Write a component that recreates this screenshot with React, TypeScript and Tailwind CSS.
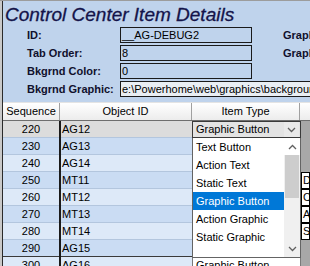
import React from 'react';

const rows = [
  { seq: '220', id: 'AG12', bg: 'bg-[#dcdcdc]', extra: '' },
  { seq: '230', id: 'AG13', bg: 'bg-[#cadcf3]', extra: '' },
  { seq: '240', id: 'AG14', bg: 'bg-[#dde9f8]', extra: '' },
  { seq: '250', id: 'MT11', bg: 'bg-[#cadcf3]', extra: 'D' },
  { seq: '260', id: 'MT12', bg: 'bg-[#dde9f8]', extra: 'C' },
  { seq: '270', id: 'MT13', bg: 'bg-[#cadcf3]', extra: 'A' },
  { seq: '280', id: 'MT14', bg: 'bg-[#dde9f8]', extra: 'S' },
  { seq: '290', id: 'AG15', bg: 'bg-[#cadcf3]', extra: '' },
  { seq: '300', id: 'AG16', bg: 'bg-[#dde9f8]', extra: '' },
];

const items = ['Text Button', 'Action Text', 'Static Text', 'Graphic Button', 'Action Graphic', 'Static Graphic'];

function Chevron({ up = false }: { up?: boolean }) {
  return (
    <svg width="9" height="6" viewBox="0 0 9 6">
      <polyline
        points={up ? '1,5 4.5,1.5 8,5' : '1,1 4.5,4.5 8,1'}
        fill="none"
        stroke="#606060"
        strokeWidth="1.3"
      />
    </svg>
  );
}

function Field({ label, value, right, full, light }: { label: string; value: string; right?: string; full?: boolean; light?: boolean }) {
  return (
    <div className="flex h-[16px] items-center overflow-hidden">
      <div className="w-[117px] shrink-0 pl-[24px] text-[11px] font-bold leading-[16px] text-[#10102c] whitespace-nowrap">{label}</div>
      <div
        className={`h-[16px] border border-[#1a1a1a] pl-[1px] text-[11px] leading-[14px] text-black whitespace-nowrap overflow-hidden ${
          full ? 'flex-1 border-r-0' : 'w-[132px] shrink-0'
        } ${light ? 'bg-[#e9eef3]' : ''}`}
      >
        {value}
      </div>
      {right && <div className="ml-[31px] shrink-0 text-[11px] font-bold leading-[16px] text-[#10102c] whitespace-nowrap">{right}</div>}
    </div>
  );
}

export default function App() {
  return (
    <div className="w-[310px] h-[266px] overflow-hidden bg-[#bfd3ec] border-t border-[#9c9c9c] font-['Liberation_Sans',Arial,sans-serif]">
      <div className="flex h-full">
        <div className="w-[2px] shrink-0 bg-[#c9c9c9]" />
        <div className="w-[1px] shrink-0 bg-[#2a2a2a]" />
        <div className="flex-1 min-w-0 flex flex-col">
          <div className="h-[26px] pt-[1px] pl-[2px] text-[19px] italic leading-[26px] text-[#14144a] whitespace-nowrap font-['Liberation_Sans',sans-serif] [-webkit-text-stroke:0.3px_#14144a]">
            Control Center Item Details
          </div>
          <div className="flex flex-col gap-[2px]">
            <Field label="ID:" value="__AG-DEBUG2" right="Graphic" />
            <Field label="Tab Order:" value="8" right="Graphic" />
            <Field label="Bkgrnd Color:" value="0" />
            <Field label="Bkgrnd Graphic:" value="e:\Powerhome\web\graphics\background.jpg" full light />
          </div>
          <div className="mt-[5px] flex h-[19px] border-t border-[#e4e4e4] border-b border-b-[#6e6e6e] bg-gradient-to-b from-[#ffffff] to-[#ececec] text-[11px] leading-[17px] text-black">
            <div className="w-[57px] shrink-0 text-center border-r border-[#a0a0a0]">Sequence</div>
            <div className="w-[132px] shrink-0 text-center border-r border-[#a0a0a0]">Object ID</div>
            <div className="w-[108px] shrink-0 text-center border-r border-[#a0a0a0]">Item Type</div>
            <div className="flex-1" />
          </div>
          {rows.map((r, i) => (
            <div key={r.seq} className="flex h-[17px] shrink-0 text-[11px] leading-[16px] text-black">
              <div className={`w-[56px] shrink-0 text-center ${r.bg} border-b ${i === 7 ? 'border-[#3a3a3a]' : 'border-[#b3c6de]'}`}>{r.seq}</div>
              <div className="w-[2px] shrink-0 bg-[#1a1a1a]" />
              <div className={`w-[131px] shrink-0 pl-[1px] ${r.bg} border-b ${i === 7 ? 'border-[#3a3a3a]' : 'border-[#b3c6de]'}`}>{r.id}</div>
              <div className="w-[109px] shrink-0 relative">
                {i === 0 ? (
                  <>
                    <div className="h-[17px] flex border border-[#3a3a3a] bg-[#e3e3e3]">
                      <div className="flex-1 pl-[3px] leading-[15px]">Graphic Button</div>
                      <div className="w-[15px] mr-[1px] flex items-center justify-center bg-[#e9e9e9]">
                        <Chevron />
                      </div>
                    </div>
                    <div className="absolute top-[17px] left-0 z-10 w-[109px] h-[120px] flex bg-white border-x border-b border-[#646464]">
                      <div className="flex-1 flex flex-col">
                        {items.map((it) => (
                          <div
                            key={it}
                            className={`h-[18px] pl-[3px] leading-[18px] text-[11px] ${
                              it === 'Graphic Button' ? 'bg-[#0078d7] text-white' : 'text-black'
                            }`}
                          >
                            {it}
                          </div>
                        ))}
                      </div>
                      <div className="w-[16px] flex flex-col bg-[#f0f0f0]">
                        <div className="h-[17px] flex items-center justify-center bg-white">
                          <Chevron up />
                        </div>
                        <div className="h-[43px] mx-[1px] bg-[#cdcdcd]" />
                        <div className="flex-1" />
                        <div className="h-[16px] flex items-center justify-center">
                          <Chevron />
                        </div>
                      </div>
                    </div>
                  </>
                ) : i === 8 ? (
                  <div className="h-[17px] border border-[#7a7a7a] bg-white pl-[3px] leading-[15px] whitespace-nowrap overflow-hidden">
                    Graphic Button
                  </div>
                ) : (
                  <div className="h-[17px] border border-[#7a7a7a] bg-white" />
                )}
              </div>
              {r.extra ? (
                <div className="flex-1 bg-white border border-black pl-[1px] leading-[15px] overflow-hidden">{r.extra}</div>
              ) : (
                <div className="flex-1 bg-[#a8a8a8]" />
              )}
            </div>
          ))}
        </div>
      </div>
    </div>
  );
}
